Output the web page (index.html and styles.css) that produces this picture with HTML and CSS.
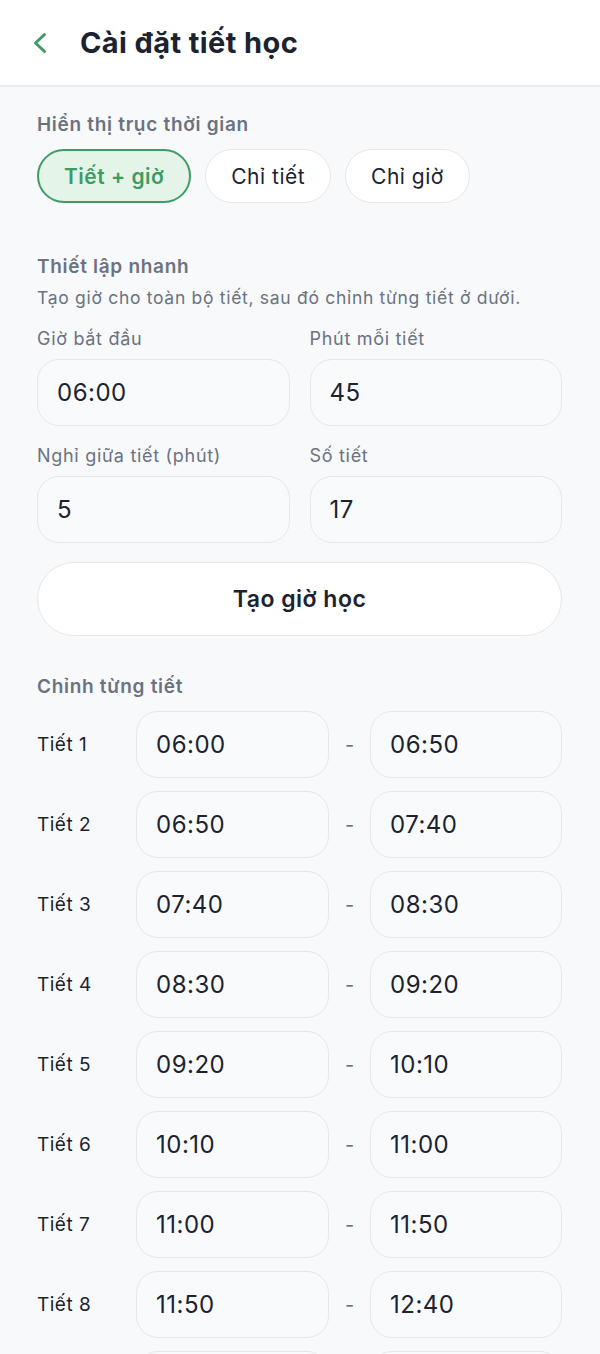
FILE: index.html
```html
<!DOCTYPE html>
<html lang="vi">
<head>
<meta charset="utf-8">
<title>Cài đặt tiết học</title>
<link rel="stylesheet" href="styles.css">
</head>
<body>
<header class="topbar">
  <button class="back" aria-label="Quay lại">
    <svg width="16" height="22" viewBox="0 0 16 22"><path d="M12.5 2.5 L3.5 11 L12.5 19.5" fill="none" stroke="#3e9c63" stroke-width="3" stroke-linecap="round" stroke-linejoin="round"/></svg>
  </button>
  <h1 class="title">Cài đặt tiết học</h1>
</header>
<main class="content">
  <section class="section">
    <h2 class="sec-title">Hiển thị trục thời gian</h2>
    <div class="chips">
      <span class="chip active">Tiết + giờ</span>
      <span class="chip">Chỉ tiết</span>
      <span class="chip">Chỉ giờ</span>
    </div>
  </section>

  <section class="section quick">
    <h2 class="sec-title">Thiết lập nhanh</h2>
    <p class="sub">Tạo giờ cho toàn bộ tiết, sau đó chỉnh từng tiết ở dưới.</p>
    <div class="grid">
      <label class="field"><span class="lbl">Giờ bắt đầu</span><span class="input">06:00</span></label>
      <label class="field"><span class="lbl">Phút mỗi tiết</span><span class="input">45</span></label>
      <label class="field"><span class="lbl">Nghỉ giữa tiết (phút)</span><span class="input">5</span></label>
      <label class="field"><span class="lbl">Số tiết</span><span class="input">17</span></label>
    </div>
    <button class="gen">Tạo giờ học</button>
  </section>

  <section class="section periods">
    <h2 class="sec-title">Chỉnh từng tiết</h2>
    <div class="rows">
      <div class="row"><span class="rlbl">Tiết 1</span><span class="input">06:00</span><span class="dash">-</span><span class="input">06:50</span></div>
      <div class="row"><span class="rlbl">Tiết 2</span><span class="input">06:50</span><span class="dash">-</span><span class="input">07:40</span></div>
      <div class="row"><span class="rlbl">Tiết 3</span><span class="input">07:40</span><span class="dash">-</span><span class="input">08:30</span></div>
      <div class="row"><span class="rlbl">Tiết 4</span><span class="input">08:30</span><span class="dash">-</span><span class="input">09:20</span></div>
      <div class="row"><span class="rlbl">Tiết 5</span><span class="input">09:20</span><span class="dash">-</span><span class="input">10:10</span></div>
      <div class="row"><span class="rlbl">Tiết 6</span><span class="input">10:10</span><span class="dash">-</span><span class="input">11:00</span></div>
      <div class="row"><span class="rlbl">Tiết 7</span><span class="input">11:00</span><span class="dash">-</span><span class="input">11:50</span></div>
      <div class="row"><span class="rlbl">Tiết 8</span><span class="input">11:50</span><span class="dash">-</span><span class="input">12:40</span></div>
      <div class="row"><span class="rlbl">Tiết 9</span><span class="input">12:40</span><span class="dash">-</span><span class="input">13:30</span></div>
    </div>
  </section>
</main>
</body>
</html>
```
FILE: styles.css
```css
* { box-sizing: border-box; }
html, body { margin: 0; padding: 0; }
body {
  background: #f7f9fb;
  font-family: "Inter", "Noto Sans", sans-serif;
  color: #1c2330;
}
.topbar {
  height: 87px;
  background: #ffffff;
  border-bottom: 2px solid #e9ecef;
  display: flex;
  align-items: center;
  padding-left: 32px;
  gap: 26px;
}
.back {
  border: 0;
  background: none;
  padding: 0;
  width: 22px;
  height: 24px;
  display: flex;
  align-items: center;
  justify-content: flex-start;
}
.title {
  margin: 0;
  font-size: 29px;
  font-weight: 700;
  letter-spacing: 0.4px;
  line-height: 36px;
  color: #1b2230;
}
.content {
  padding: 26px 38px 0 37px;
}
.sec-title {
  margin: 0;
  font-size: 19px;
  font-weight: 600;
  letter-spacing: 0.7px;
  color: #6b7280;
  line-height: 24px;
}
.chips {
  display: flex;
  gap: 14px;
  margin-top: 12px;
}
.chip {
  height: 54px;
  padding: 0 25px;
  border-radius: 27px;
  border: 1.5px solid #e5e7eb;
  background: #ffffff;
  display: flex;
  align-items: center;
  font-size: 21px;
  letter-spacing: 0.5px;
  color: #1c2330;
}
.chip.active {
  background: #e4f4e9;
  border: 2px solid #3e9c63;
  color: #3e9c63;
  font-weight: 600;
}
.quick { margin-top: 52px; }
.sub {
  margin: 8px 0 0;
  font-size: 17.5px;
  letter-spacing: 0.7px;
  color: #6b7280;
  line-height: 22px;
}
.grid {
  display: grid;
  grid-template-columns: 1fr 1fr;
  column-gap: 20px;
  row-gap: 19px;
  margin-top: 19px;
}
.field { display: flex; flex-direction: column; gap: 9px; }
.lbl {
  font-size: 18px;
  letter-spacing: 0.7px;
  color: #6b7280;
  line-height: 22px;
}
.input {
  height: 67px;
  border: 1.5px solid #e5e7eb;
  border-radius: 22px;
  background: #f8fafc;
  display: flex;
  align-items: center;
  padding-left: 19px;
  font-size: 24px;
  letter-spacing: 0.5px;
  color: #1c2330;
}
.gen {
  display: block;
  margin-top: 19px;
  width: 100%;
  height: 74px;
  border-radius: 37px;
  border: 1.5px solid #e5e7eb;
  background: #ffffff;
  font-family: inherit;
  font-size: 23px;
  letter-spacing: 0.5px;
  font-weight: 600;
  color: #1c2330;
}
.periods { margin-top: 39px; }
.rows {
  display: flex;
  flex-direction: column;
  gap: 13px;
  margin-top: 12px;
}
.row {
  display: grid;
  grid-template-columns: 99px 193px 41px 1fr;
  align-items: center;
}
.rlbl { font-size: 19px; letter-spacing: 0.5px; color: #1c2330; }
.dash { text-align: center; color: #6b7280; font-size: 20px; }
```
